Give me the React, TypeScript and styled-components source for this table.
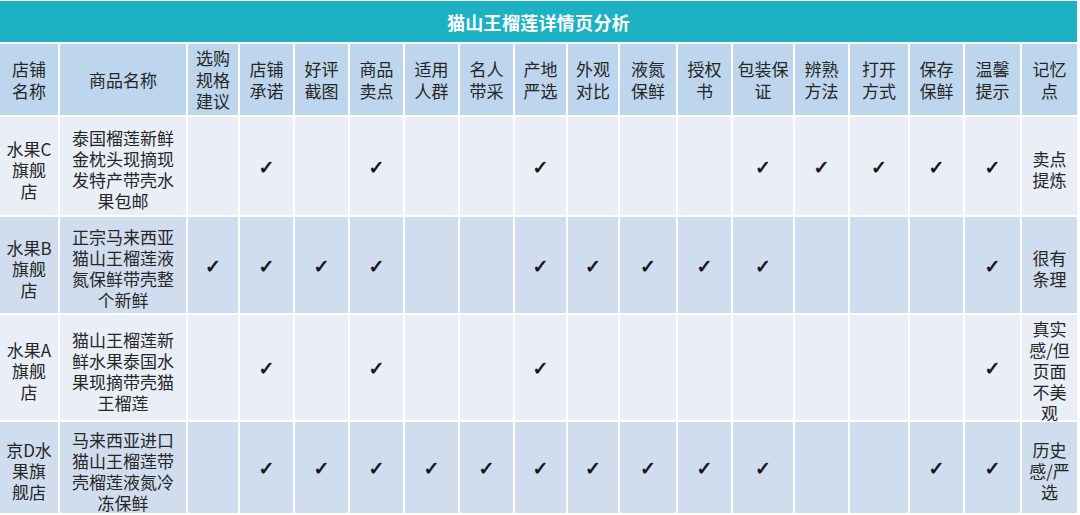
import * as React from 'react';
import styled, { createGlobalStyle } from 'styled-components';

const GlobalStyle = createGlobalStyle`
    html, body {
        margin: 0;
        padding: 0;
        background: #ffffff;
    }
    body {
        font-family: 'Noto Sans CJK SC', 'Noto Sans', sans-serif;
        color: #222222;
    }
`;

// right edges of each column in the picture; cell width = step - gap
const edges = [0, 60, 188, 240, 295, 350, 405, 460, 515, 568, 620, 678, 733, 795, 850, 910, 965, 1022, 1079];
const columns = edges.slice(1).map((e, i) => e - edges[i] - 2);

const headers = [
    '店铺\n名称',
    '商品名称',
    '选购\n规格\n建议',
    '店铺\n承诺',
    '好评\n截图',
    '商品\n卖点',
    '适用\n人群',
    '名人\n带采',
    '产地\n严选',
    '外观\n对比',
    '液氮\n保鲜',
    '授权\n书',
    '包装保\n证',
    '辨熟\n方法',
    '打开\n方式',
    '保存\n保鲜',
    '温馨\n提示',
    '记忆\n点',
];

type Row = { shop: string; name: string; checks: number[]; memo: string; height: number };

const rows: Row[] = [
    {
        shop: '水果C\n旗舰\n店',
        name: '泰国榴莲新鲜\n金枕头现摘现\n发特产带壳水\n果包邮',
        checks: [0, 1, 0, 1, 0, 0, 1, 0, 0, 0, 1, 1, 1, 1, 1],
        memo: '卖点\n提炼',
        height: 98,
    },
    {
        shop: '水果B\n旗舰\n店',
        name: '正宗马来西亚\n猫山王榴莲液\n氮保鲜带壳整\n个新鲜',
        checks: [1, 1, 1, 1, 0, 0, 1, 1, 1, 1, 1, 0, 0, 0, 1],
        memo: '很有\n条理',
        height: 96,
    },
    {
        shop: '水果A\n旗舰\n店',
        name: '猫山王榴莲新\n鲜水果泰国水\n果现摘带壳猫\n王榴莲',
        checks: [0, 1, 0, 1, 0, 0, 1, 0, 0, 0, 0, 0, 0, 0, 1],
        memo: '真实\n感/但\n页面\n不美\n观',
        height: 105,
    },
    {
        shop: '京D水\n果旗\n舰店',
        name: '马来西亚进口\n猫山王榴莲带\n壳榴莲液氮冷\n冻保鲜',
        checks: [0, 1, 1, 1, 1, 1, 1, 1, 1, 1, 1, 0, 0, 1, 1],
        memo: '历史\n感/严\n选',
        height: 91,
    },
];

const Page = styled.div`
    width: 1080px;
    height: 515px;
    padding-top: 1px;
    box-sizing: border-box;
    overflow: hidden;
`;

const Table = styled.div<{ $rowHeights: number[] }>`
    display: grid;
    grid-template-columns: ${columns.map((c) => `${c}px`).join(' ')};
    grid-template-rows: 41px 71px ${(p) => p.$rowHeights.map((h) => `${h}px`).join(' ')};
    column-gap: 2px;
    row-gap: 2px;
    width: max-content;
    background: #ffffff;
`;

const Title = styled.div`
    grid-column: 1 / -1;
    background: #1cb2c3;
    color: #ffffff;
    font-weight: 700;
    font-size: 18px;
    display: flex;
    align-items: center;
    justify-content: center;
    letter-spacing: 0.3px;
`;

const Cell = styled.div<{ $tone: 'head' | 'light' | 'dark' }>`
    background: ${(p) => (p.$tone === 'head' ? '#bdd6ed' : p.$tone === 'light' ? '#e9eef7' : '#d0ddef')};
    display: flex;
    align-items: center;
    justify-content: center;
    text-align: center;
    white-space: pre-line;
    font-size: 17px;
    line-height: ${(p) => (p.$tone === 'head' ? '21.5px' : '21px')};
    color: #262626;
    padding: ${(p) => (p.$tone === 'head' ? '0 2px' : '6px 2px 0')};
`;

const Check = styled.span`
    font-family: 'DejaVu Sans', sans-serif;
    font-size: 19px;
    font-weight: 700;
    color: #111111;
    line-height: 1;
    -webkit-text-stroke: 0.7px #111111;
    margin-top: -4px;
`;

export default function App() {
    return (
        <Page>
            <GlobalStyle />
            <Table $rowHeights={rows.map((r) => r.height)}>
                <Title>猫山王榴莲详情页分析</Title>
                {headers.map((h) => (
                    <Cell key={h} $tone="head">
                        {h}
                    </Cell>
                ))}
                {rows.map((row, i) => {
                    const tone = i % 2 === 0 ? 'light' : 'dark';
                    return (
                        <React.Fragment key={row.shop}>
                            <Cell $tone={tone}>{row.shop}</Cell>
                            <Cell $tone={tone}>{row.name}</Cell>
                            {row.checks.map((c, j) => (
                                <Cell key={j} $tone={tone}>
                                    {c ? <Check>✓</Check> : null}
                                </Cell>
                            ))}
                            <Cell $tone={tone}>{row.memo}</Cell>
                        </React.Fragment>
                    );
                })}
            </Table>
        </Page>
    );
}
